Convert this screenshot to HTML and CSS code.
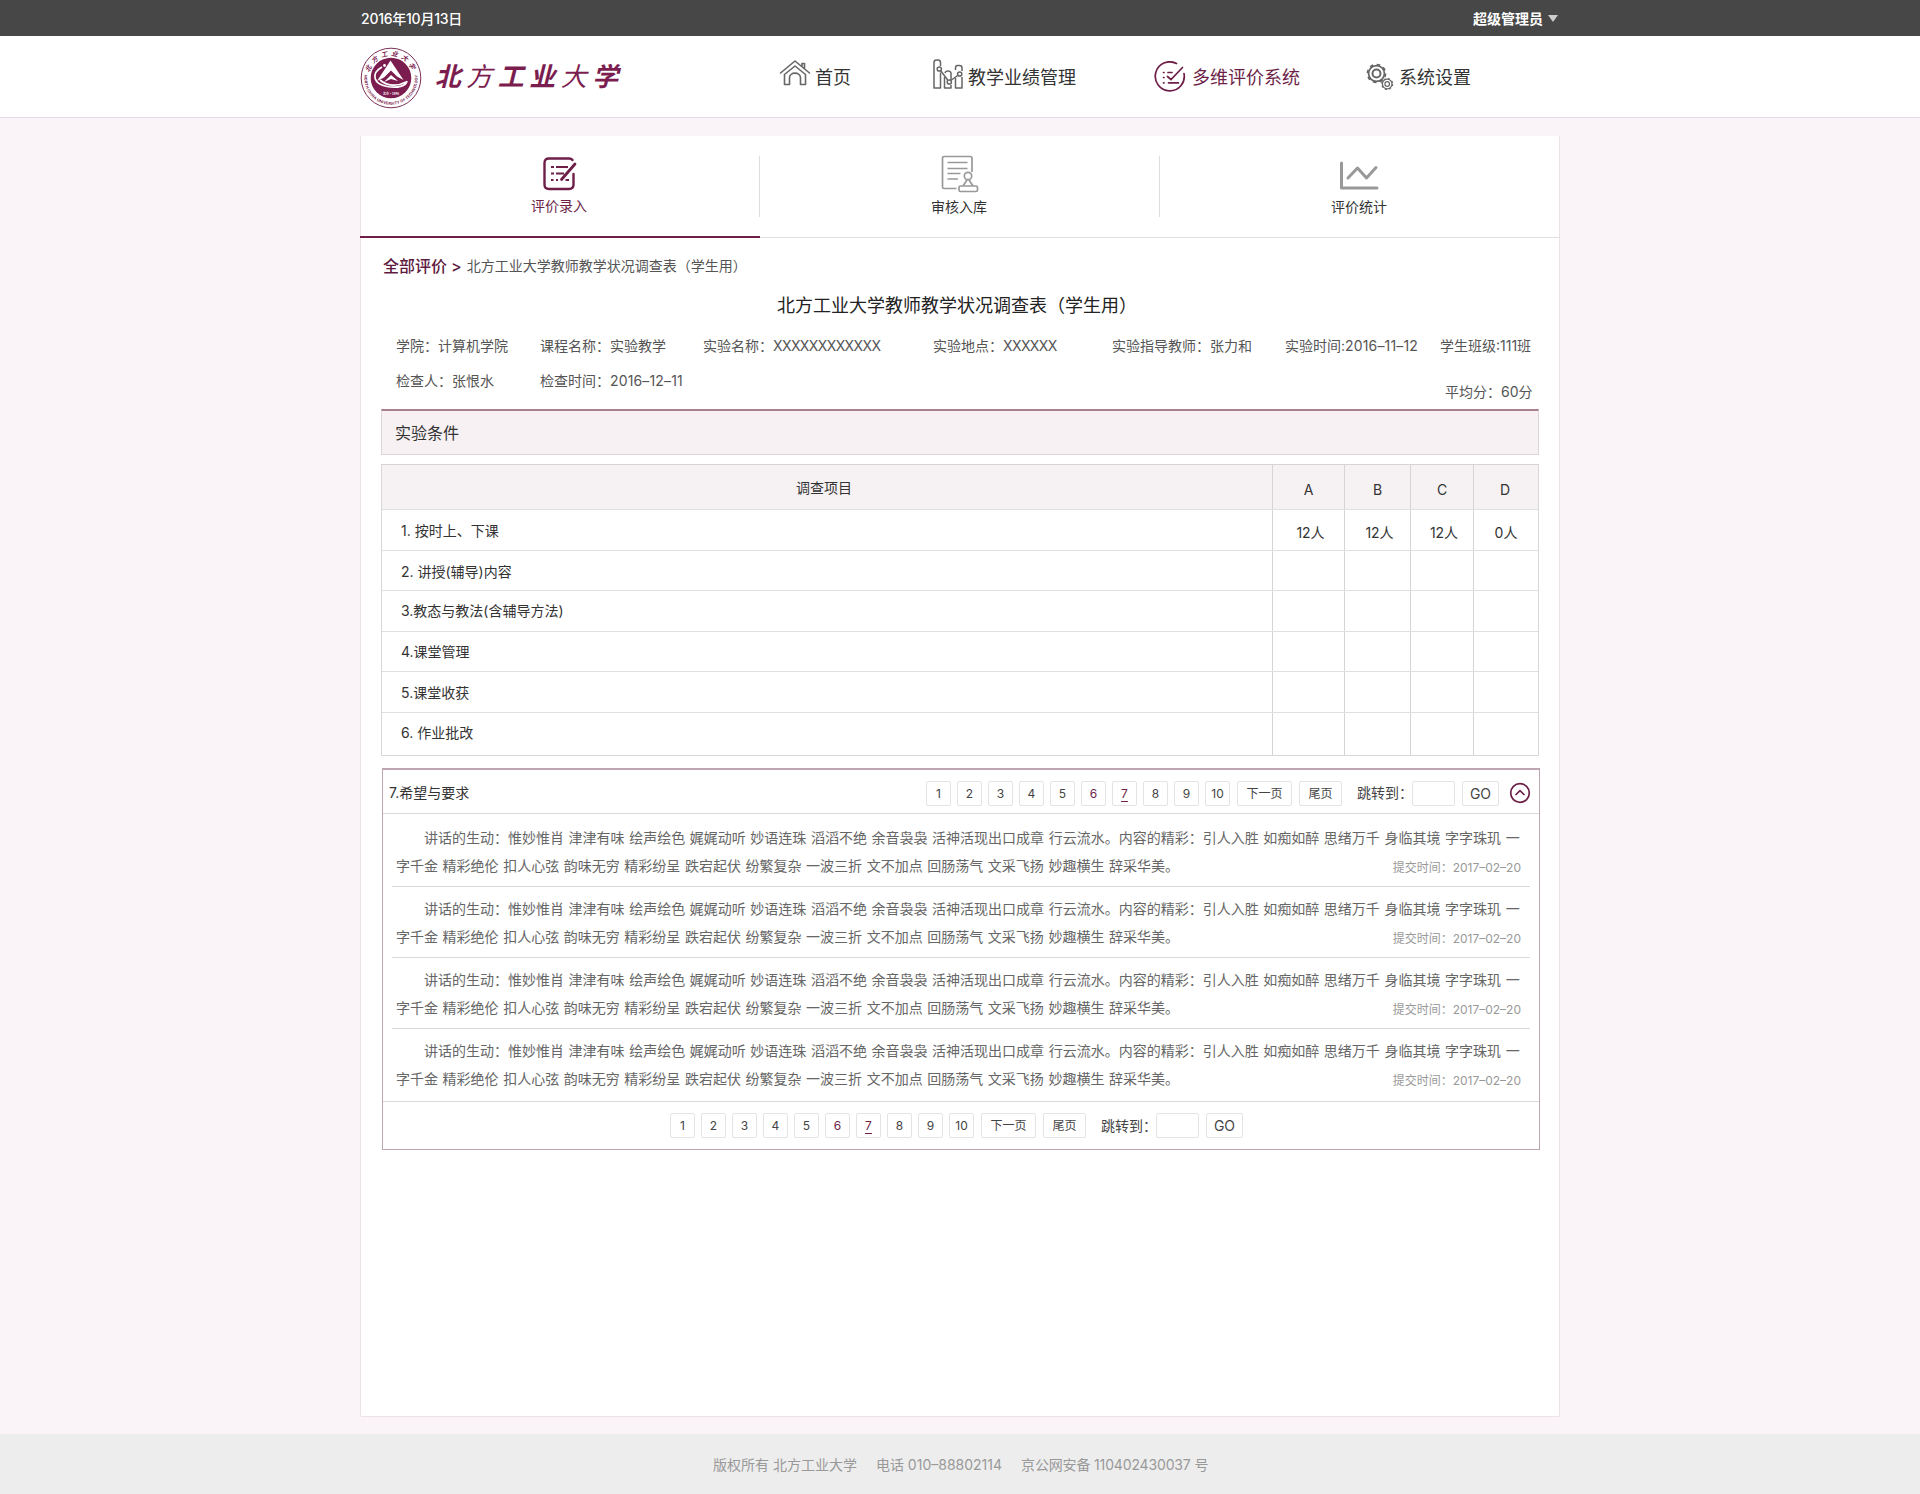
FILE: index.html
```
<!DOCTYPE html>
<html lang="zh-CN">
<head>
<meta charset="utf-8">
<title>北方工业大学 多维评价系统</title>
<link rel="stylesheet" href="styles.css">
</head>
<body>
<div class="topbar"><div class="wrap topbar-in"><span class="date">2016年10月13日</span><span class="user">超级管理员<i class="caret"></i></span></div></div>
<header class="header">
  <div class="wrap header-in">
    <svg class="seal" viewBox="0 0 62 62" width="62" height="62">
      <defs>
        <path id="arcTop" d="M9 31a22 22 0 0 1 44 0"/>
        <path id="arcBottom" d="M5.800 26a25.700 25.700 0 1 0 50.400 0"/>
      </defs>
      <circle cx="31" cy="31" r="29.800" fill="#fff" stroke="#7b2f57" stroke-width="1"/>
      <circle cx="31" cy="31" r="20.300" fill="#7c1d50"/>
      <text class="seal-cn"><textPath href="#arcTop" startOffset="50%" text-anchor="middle">北方工业大学</textPath></text>
      <text class="seal-en"><textPath href="#arcBottom" startOffset="50%" text-anchor="middle">NORTH CHINA UNIVERSITY OF TECHNOLOGY</textPath></text>
      <path d="M30.500 13.500L43.500 33L37 29.500L31 23.500L24 30.500L17 34Z" fill="#fff"/>
      <path d="M31 28l7 6-7-2-7 3z" fill="#fff"/>
      <path d="M22 20C10 27 14 37 27 39.500C38 41.500 46 39 47 34M20 33c7 6 17 7 26 2" fill="none" stroke="#fff" stroke-width="1.700"/>
      <circle cx="24.500" cy="18.500" r="1.400" fill="#fff"/>
      <text class="seal-year" x="31" y="47.500" text-anchor="middle">北京·1946</text>
    </svg>
    <div class="brand"><span>北</span><span class="thin">方</span><span>工</span><span>业</span><span class="thin">大</span><span>学</span></div>
    <nav class="nav">
      <a class="nav-home"><svg width="32" height="28" viewBox="0 0 32 28"><g fill="none" stroke="#666" stroke-width="1.600" stroke-linejoin="round" stroke-linecap="round"><path d="M1.500 14L16 2l14.500 12M23 7V4.500h2.500V10"/><path d="M5.500 15.500V25.500h5V19c0-6.500 11-6.500 11 0v6.500h5V15.500L16 7z"/></g></svg>首页</a>
      <a class="nav-result"><svg width="30" height="32" viewBox="0 0 30 32"><g fill="none" stroke="#666" stroke-width="1.500" stroke-linejoin="round"><path d="M7.500 8V4.500Q7.500 2 5 2H3.500Q1 2 1 4.500V30H7.500V14.500M11.500 19V30h6.500v-3M12 15q.5-2 3-2t3 2v7M22.500 12V10q0-2.500 2-2.500h2q2.500 0 2.500 2.500v3M22.500 20v10H29V19"/><path d="M7.700 12.800l7 9.200M17.700 22.500l7-5"/><circle cx="6.300" cy="11" r="2.100"/><circle cx="16.300" cy="24" r="2.100"/><circle cx="26.700" cy="16" r="2.100"/></g></svg>教学业绩管理</a>
      <a class="nav-eval active"><svg width="32" height="32" viewBox="0 0 32 32"><g fill="none" stroke="#6d1f48" stroke-width="1.700" stroke-linecap="round"><path d="M22.500 2.500A14.500 14.500 0 1 0 30 12.500"/><path d="M28.500 6.500L17 18.500l-3.500-3M9.500 11.500h.5M14 11.500h4M9.500 16.500h.5M9.500 21.800h.5M14.500 21.800h10"/></g></svg>多维评价系统</a>
      <a class="nav-set"><svg width="28" height="28" viewBox="0 0 28 28"><g fill="none" stroke="#666"><circle cx="10.500" cy="10.500" r="7.900" stroke-width="1.700"/><circle cx="10.500" cy="10.500" r="9" stroke-width="1.700" stroke-dasharray="3.500 3.569"/><circle cx="10.500" cy="10.500" r="4" stroke-width="2"/><circle cx="21.200" cy="21" r="4.800" stroke-width="1.200"/><circle cx="21.200" cy="21" r="5.500" stroke-width="1.100" stroke-dasharray="2.160 2.160"/><circle cx="21.200" cy="21" r="2.300" stroke-width="1.200"/></g></svg>系统设置</a>
    </nav>
  </div>
</header>
<main class="panel">
  <div class="tabs">
    <div class="tab on"><svg width="36" height="36" viewBox="0 0 36 36"><g fill="none" stroke="#6d1f48" stroke-width="2.400" stroke-linecap="round"><path d="M31.500 18v10.500q0 4.500-4.500 4.500H7q-4.500 0-4.500-4.500V7Q2.500 2.500 7 2.500h20q2.500 0 3.500 1.500"/><path d="M33 8L19.500 23.500" stroke-width="2.800"/></g><path d="M9 11h3M14 11h12M9 17.500h3M14 17.500h8M9 24h2.500M14 24h2M23.500 24H27" stroke="#6d1f48" stroke-width="2.200"/></svg>评价录入</div>
    <div class="tab"><svg width="38" height="38" viewBox="0 0 38 38"><g fill="none" stroke="#999" stroke-width="1.700" stroke-linejoin="round"><path d="M31 17V3q0-1.500-1.500-1.500H3Q1.500 1.500 1.500 3v29Q1.500 33.500 3 33.500h12.500"/><path d="M6.500 7.500h20M6.500 13.500h20M6.500 18.500h13M6.500 24h10.500"/><circle cx="27" cy="21" r="3.700"/><path d="M26 25l-4 6M28 25l4 6"/><rect x="18" y="31" width="18.500" height="5.500" rx="1.500"/></g></svg>审核入库</div>
    <div class="tab"><svg width="40" height="38" viewBox="0 0 40 38"><path d="M2.500 8v25H38M9 23l9.500-10 9 10L37 12.500" fill="none" stroke="#999" stroke-width="3" stroke-linecap="round" stroke-linejoin="round"/></svg>评价统计</div>
  </div>
  <div class="crumb"><b>全部评价</b><b class="gt">&gt;</b><span>北方工业大学教师教学状况调查表（学生用）</span></div>
  <h1>北方工业大学教师教学状况调查表（学生用）</h1>
  <div class="info">
    <span>学院：计算机学院</span><span>课程名称：实验教学</span><span>实验名称：<i class="xs">XXXXXXXXXXXX</i></span><span>实验地点：<i class="xs">XXXXXX</i></span><span>实验指导教师：张力和</span><span>实验时间:<i class="num">2016–11–12</i></span><span>学生班级:111班</span>
    <span>检查人：张恨水</span><span>检查时间：<i class="num">2016–12–11</i></span><span class="avg">平均分：60分</span>
  </div>
  <div class="section">实验条件</div>
  <div class="survey">
    <div class="row head"><span>调查项目</span><span>A</span><span>B</span><span>C</span><span>D</span></div>
    <div class="row r1"><span>1. 按时上、下课</span><span>12人</span><span>12人</span><span>12人</span><span>0人</span></div>
    <div class="row r2"><span>2. 讲授(辅导)内容</span><span></span><span></span><span></span><span></span></div>
    <div class="row r3"><span>3.教态与教法(含辅导方法)</span><span></span><span></span><span></span><span></span></div>
    <div class="row r4"><span>4.课堂管理</span><span></span><span></span><span></span><span></span></div>
    <div class="row r5"><span>5.课堂收获</span><span></span><span></span><span></span><span></span></div>
    <div class="row r6"><span>6. 作业批改</span><span></span><span></span><span></span><span></span></div>
  </div>
  <div class="wishes">
    <div class="wish-head"><span class="wish-title">7.希望与要求</span>
      <div class="pager"><a>1</a><a>2</a><a>3</a><a>4</a><a>5</a><a class="hot">6</a><a class="hot cur">7</a><a>8</a><a>9</a><a>10</a><a class="next">下一页</a><a class="last">尾页</a><span class="jump">跳转到：</span><a class="box"></a><a class="go">GO</a></div>
      <svg class="fold" width="22" height="22" viewBox="0 0 22 22"><g fill="none" stroke="#6d1f48" stroke-width="1.700"><circle cx="11" cy="11" r="9.300"/><path d="M6.500 13L11 8.700l4.500 4.300"/></g></svg>
    </div>
    <div class="wish"><p>讲话的生动：惟妙惟肖 津津有味 绘声绘色 娓娓动听 妙语连珠 滔滔不绝 余音袅袅 活神活现出口成章 行云流水。内容的精彩：引人入胜 如痴如醉 思绪万千 身临其境 字字珠玑 一<br>字千金 精彩绝伦 扣人心弦 韵味无穷 精彩纷呈 跌宕起伏 纷繁复杂 一波三折 文不加点 回肠荡气 文采飞扬 妙趣横生 辞采华美。</p><time>提交时间：2017–02–20</time></div>
    <div class="wish"><p>讲话的生动：惟妙惟肖 津津有味 绘声绘色 娓娓动听 妙语连珠 滔滔不绝 余音袅袅 活神活现出口成章 行云流水。内容的精彩：引人入胜 如痴如醉 思绪万千 身临其境 字字珠玑 一<br>字千金 精彩绝伦 扣人心弦 韵味无穷 精彩纷呈 跌宕起伏 纷繁复杂 一波三折 文不加点 回肠荡气 文采飞扬 妙趣横生 辞采华美。</p><time>提交时间：2017–02–20</time></div>
    <div class="wish"><p>讲话的生动：惟妙惟肖 津津有味 绘声绘色 娓娓动听 妙语连珠 滔滔不绝 余音袅袅 活神活现出口成章 行云流水。内容的精彩：引人入胜 如痴如醉 思绪万千 身临其境 字字珠玑 一<br>字千金 精彩绝伦 扣人心弦 韵味无穷 精彩纷呈 跌宕起伏 纷繁复杂 一波三折 文不加点 回肠荡气 文采飞扬 妙趣横生 辞采华美。</p><time>提交时间：2017–02–20</time></div>
    <div class="wish"><p>讲话的生动：惟妙惟肖 津津有味 绘声绘色 娓娓动听 妙语连珠 滔滔不绝 余音袅袅 活神活现出口成章 行云流水。内容的精彩：引人入胜 如痴如醉 思绪万千 身临其境 字字珠玑 一<br>字千金 精彩绝伦 扣人心弦 韵味无穷 精彩纷呈 跌宕起伏 纷繁复杂 一波三折 文不加点 回肠荡气 文采飞扬 妙趣横生 辞采华美。</p><time>提交时间：2017–02–20</time></div>
    <div class="wish-foot">
      <div class="pager"><a>1</a><a>2</a><a>3</a><a>4</a><a>5</a><a class="hot">6</a><a class="hot cur">7</a><a>8</a><a>9</a><a>10</a><a class="next">下一页</a><a class="last">尾页</a><span class="jump">跳转到：</span><a class="box"></a><a class="go">GO</a></div>
    </div>
  </div>
</main>
<footer class="footer"><span>版权所有 北方工业大学</span><span>电话 010–88802114</span><span class="icp">京公网安备 110402430037 号</span></footer>
</body>
</html>
```
FILE: styles.css
```
* { box-sizing: border-box; }
body {
  margin: 0;
  min-height: 1494px;
  background: #faf3f8;
  color: #333;
  font: 14px/20px Inter, "Noto Sans CJK SC", sans-serif;
  white-space: nowrap;
}
.wrap { width: 1200px; margin: 0 auto; }

.topbar { height: 36px; background: #474747; color: #fff; font-weight: 500; }
.topbar-in { display: flex; justify-content: space-between; align-items: center; height: 36px; padding: 1px 2px 0 1px; }
.date { letter-spacing: -.25px; padding-top: 1px; }
.user { display: flex; align-items: center; gap: 5px; font-weight: 700; }
.caret { border: 5px solid transparent; border-top: 7px solid #ccc; border-bottom: 0; }

.header { height: 82px; background: #fff; border-bottom: 1px solid #e8dce4; }
.header-in { display: flex; align-items: flex-start; padding-top: 10px; }
.seal { margin: 1px 1px 0 0; }
.seal-cn { font: italic 700 6.500px "Noto Sans CJK SC", sans-serif; letter-spacing: 3.200px; fill: #7c1d50; }
.seal-en { font: 700 3.800px Inter, sans-serif; fill: #7c1d50; dominant-baseline: middle; letter-spacing: .05px; }
.seal-year { font: 700 3px "Noto Sans CJK SC", sans-serif; fill: #fff; }
.brand {
  display: grid;
  grid-template-columns: repeat(6, 31.500px);
  width: 189px;
  margin: 11px 0 0 9px;
  color: #7c1d50;
  font: italic 700 26px/36px "Noto Sans CJK SC", sans-serif;
  text-align: center;
}
.brand .thin { font-weight: 400; }
.nav { display: flex; font-size: 18px; line-height: 26px; padding-top: 1px; }
.nav a { display: flex; align-items: center; height: 62px; }
.nav svg { flex: none; position: relative; top: -1px; }
.nav-home { margin-left: 158px; gap: 4px; }
.nav .nav-home svg { top: -5px; }
.nav-result { margin-left: 82px; gap: 5px; }
.nav .nav-result svg { top: -4px; }
.nav-eval { margin-left: 78px; gap: 6px; }
.nav-set { margin-left: 66px; gap: 5px; }
.active { color: #6d1f48; }

.panel { width: 1200px; height: 1281px; margin: 18px auto 0; background: #fff; border: 1px solid #ebe2e8; border-top: 0; border-radius: 2px; }
.tabs { display: grid; grid-template-columns: repeat(3, 400px); margin: 0 -1px; height: 102px; border-bottom: 1px solid #e0e0e0; }
.tab { display: flex; flex-direction: column; align-items: center; gap: 4px; height: 102px; padding: 19px 2px 0 0; background: linear-gradient(#ddd, #ddd) right 20px / 1px 61px no-repeat; }
.tab:last-child { background: none; }
.tab svg { height: 38px; flex: none; margin-left: 2px; }
.tab:last-child svg { margin-left: 0; }
.tab.on { color: #6d1f48; border-bottom: 2px solid #6d1f48; gap: 3px; }

.crumb { display: flex; align-items: center; height: 24px; margin: 16px 0 0 22px; color: #555; }
.crumb b { color: #5e1a40; font-size: 16px; font-weight: 500; }
.crumb .gt { margin: 0 5px 0 4px; }
h1 { margin: 13px 0 0 416px; font-size: 18px; line-height: 30px; font-weight: 400; color: #222; }
.info { display: grid; grid-template-columns: 144px 163px 230px 179px 173px 155px 1fr; margin-left: 35px; padding-top: 15px; height: 88px; line-height: 20px; grid-auto-rows: 35px; color: #555; }
.info i { font-style: normal; }
.info .xs { letter-spacing: -.6px; }
.info .num { letter-spacing: .15px; }
.info .avg { grid-column: 7; padding: 11px 0 0 5px; }
.section { margin: 0 20px; height: 46px; border: 1px solid #dcd4d8; border-top: 2px solid #a8808f; background: #f8f1f4; padding: 10px 13px; font-size: 16px; line-height: 24px; }

.survey { margin: 9px 20px 0; border: 1px solid #d8d8d8; border-top-color: #d8d4d6; }
.row { display: grid; grid-template-columns: 890px 72px 66px 63px 1fr; height: 41px; }
.row + .row { border-top: 1px solid #e0e0e0; }
.row span + span { border-left: 1px solid #d5d5d5; text-align: center; padding: 13px 0 0 4px; }
.row span:last-child { padding-left: 0; }
.row span:first-child { padding: 11px 0 0 19px; }
.row.head { height: 44px; background: #f6f1f3; }
.row.head span:first-child { text-align: center; padding: 13px 6px 0 0; }
.row.head span + span { padding: 15px 0 0; }
.row.head span:last-child { padding-right: 2px; }
.row.r2, .row.r4 { height: 40px; }
.row.r3 span:first-child, .row.r4 span:first-child, .row.r6 span:first-child { padding-top: 10px; }
.row.r6 { height: 43px; }

.wishes { margin: 12px 19px 0 21px; border: 1px solid #bda6b1; border-top-width: 2px; height: 382px; }
.wish-head { display: flex; height: 44px; padding: 3px 0 0 6px; align-items: center; border-bottom: 1px solid #d9d9d9; }
.wish-title { width: 537px; padding-bottom: 1px; }
.pager { display: flex; align-items: center; gap: 6px; font-size: 12px; color: #444; }
.pager a { width: 25px; height: 25px; border: 1px solid #e4e4e4; border-radius: 2px; text-align: center; line-height: 23px; }
.pager .hot { color: #6d1f48; }
.pager .cur { text-decoration: underline; text-underline-offset: 3px; }
.pager .next { width: 55px; margin-left: 1px; }
.pager .last { width: 43px; margin-left: 1px; }
.pager .jump { width: 49px; margin-left: 9px; font-size: 14px; }
.pager .box { width: 43px; }
.pager .go { width: 37px; margin-left: 1px; font-size: 14px; }
.fold { margin-left: 10px; }
.wish { position: relative; height: 71px; margin: 0 9px; padding: 10px 0 0 4px; border-bottom: 1px solid #d9d9d9; color: #666; }
.wish:nth-child(2) { height: 73px; }
.wish:nth-child(n+3) { padding-top: 8px; }
.wish:nth-child(5) { height: 73px; margin: 0; padding-left: 13px; }
.wish p { margin: 0; line-height: 28px; text-indent: 28px; word-spacing: .65px; }
.wish time { position: absolute; right: 9px; top: 42px; font-size: 12px; color: #999; }
.wish:nth-child(2) time { top: 44px; }
.wish:nth-child(5) time { right: 18px; }
.wish-foot { padding: 11px 0 0 287px; }

.footer { display: flex; gap: 19px; height: 60px; margin-top: 17px; padding: 21px 0 0 713px; background: #ededed; color: #999; }
.footer .icp { letter-spacing: -.15px; }
```
